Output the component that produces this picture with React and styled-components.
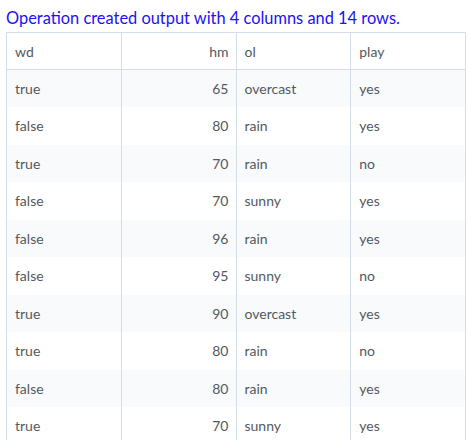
import styled, { createGlobalStyle } from "styled-components";

const GlobalStyle = createGlobalStyle`
  body {
    margin: 0;
    padding: 6px;
    background: #fff;
    font-family: "Lato", "Liberation Sans", sans-serif;
  }
`;

const Title = styled.div`
  color: #1c12f5;
  font-size: 16.4px;
  line-height: 20px;
  height: 26px;
  padding-top: 2px;
  box-sizing: border-box;
`;

const Table = styled.table`
  width: 460px;
  border-collapse: collapse;
  border: 1px solid #d5dde6;
  font-size: 14px;
  color: #535960;
  table-layout: fixed;
`;

const Th = styled.th`
  font-weight: 400;
  text-align: ${(p) => (p.$right ? "right" : "left")};
  height: 36px;
  padding: 0 7px 0 8px;
  border-left: 1px solid #d5dde6;
  border-bottom: 1px solid #d5dde6;
`;

const Row = styled.tr`
  height: 37.5px;
  background: ${(p) => (p.$odd ? "#f8fafc" : "#fff")};
`;

const Td = styled.td`
  text-align: ${(p) => (p.$right ? "right" : "left")};
  padding: 0 7px 0 8px;
  border-left: 1px solid #d5dde6;
`;

// only the rows that fit in the frame
const rows = [
  ["true", 65, "overcast", "yes"],
  ["false", 80, "rain", "yes"],
  ["true", 70, "rain", "no"],
  ["false", 70, "sunny", "yes"],
  ["false", 96, "rain", "yes"],
  ["false", 95, "sunny", "no"],
  ["true", 90, "overcast", "yes"],
  ["true", 80, "rain", "no"],
  ["false", 80, "rain", "yes"],
  ["true", 70, "sunny", "yes"],
];

export default function App() {
  return (
    <>
      <GlobalStyle />
      <Title>Operation created output with 4 columns and 14 rows.</Title>
      <Table>
        <thead>
          <tr>
            <Th>wd</Th>
            <Th $right>hm</Th>
            <Th>ol</Th>
            <Th>play</Th>
          </tr>
        </thead>
        <tbody>
          {rows.map((r, i) => (
            <Row key={i} $odd={i % 2 === 0}>
              <Td>{r[0]}</Td>
              <Td $right>{r[1]}</Td>
              <Td>{r[2]}</Td>
              <Td>{r[3]}</Td>
            </Row>
          ))}
        </tbody>
      </Table>
    </>
  );
}
